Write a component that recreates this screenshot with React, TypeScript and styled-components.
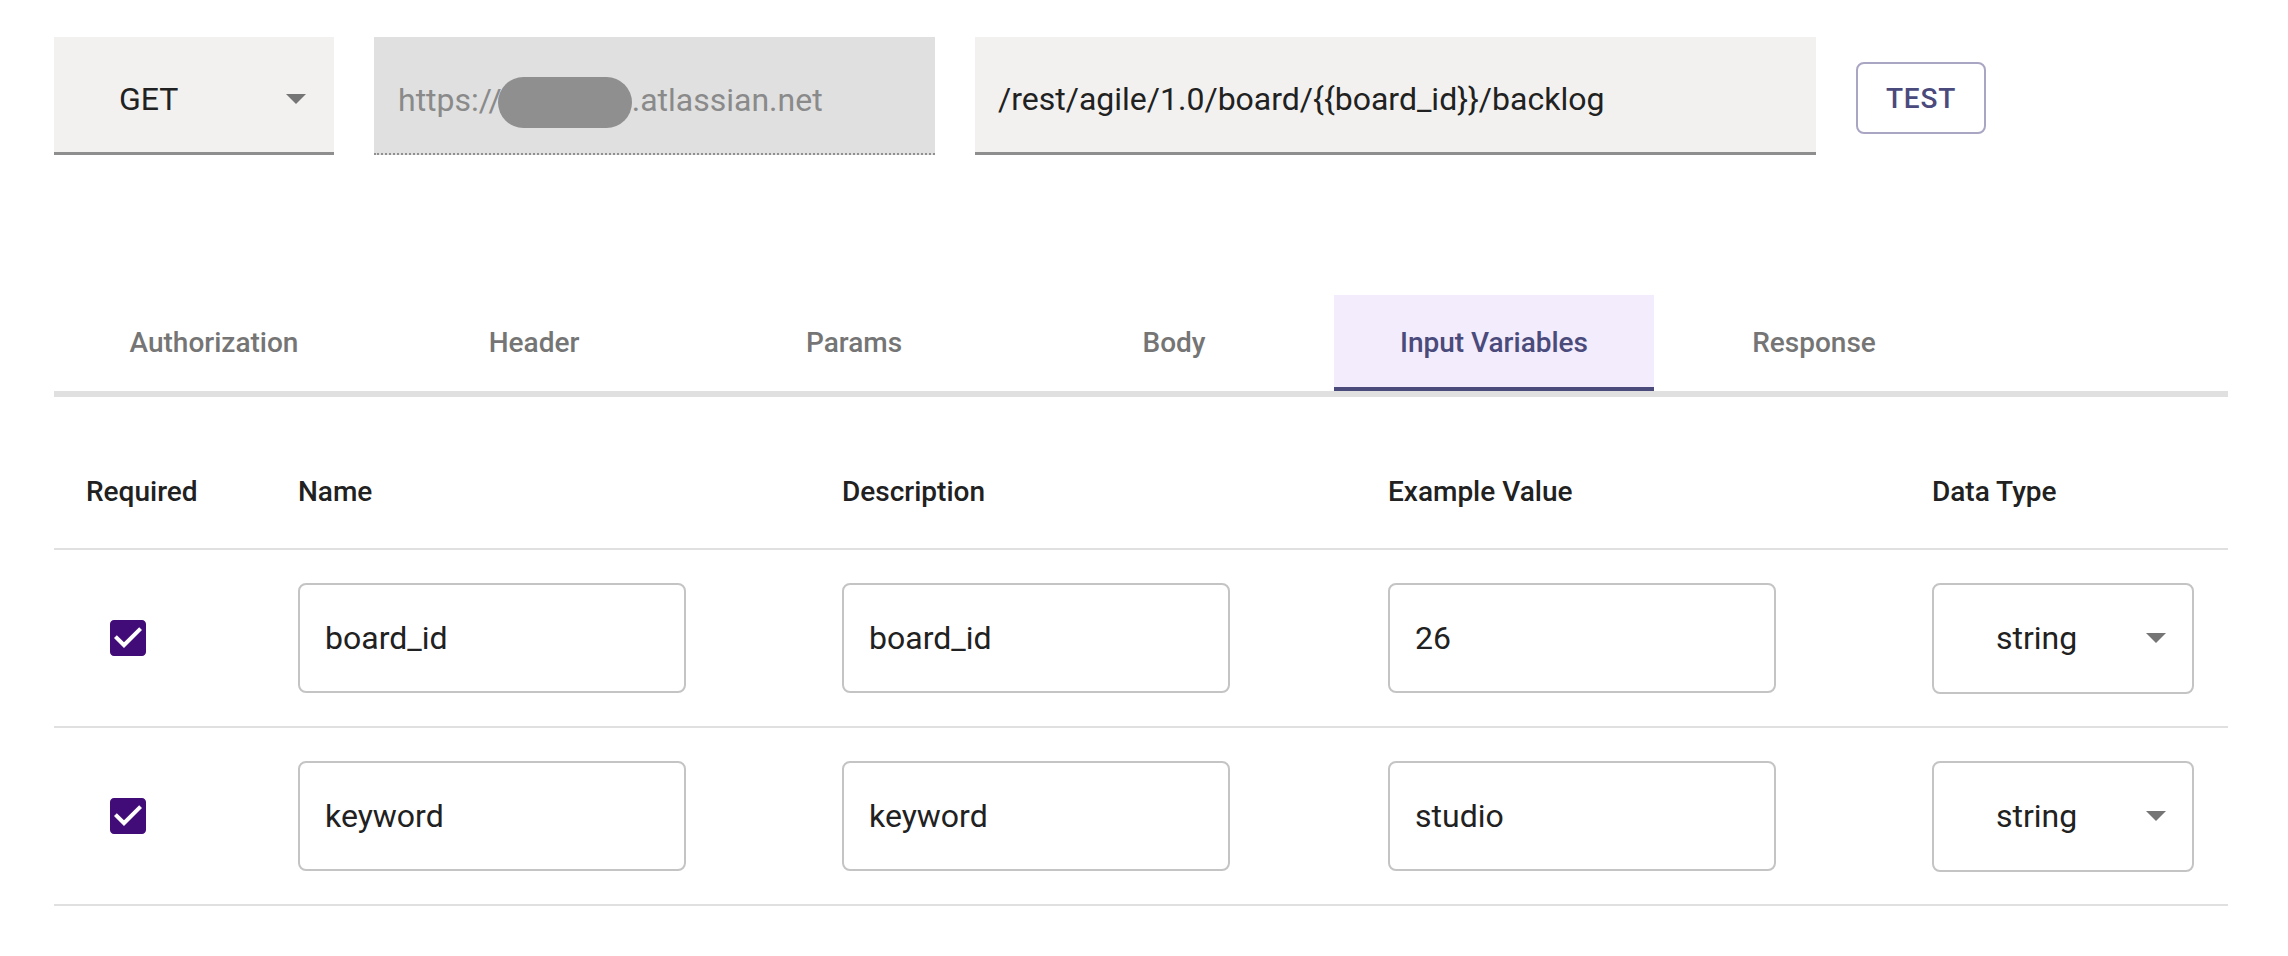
import React from "react";
import styled, { createGlobalStyle } from "styled-components";

const Global = createGlobalStyle`
  html, body { margin: 0; padding: 0; background: #ffffff; }
  body { font-family: Roboto, "Liberation Sans", Arial, sans-serif; color: #212121; }
  * { box-sizing: border-box; }
`;

const Page = styled.div`
  width: 2288px;
  min-height: 956px;
  padding: 37px 60px 0 54px;
`;

const TopBar = styled.div`
  display: flex;
  align-items: flex-start;
  gap: 40px;
`;

const Field = styled.div<{ $w: number; $disabled?: boolean; $pl: number }>`
  width: ${(p) => p.$w}px;
  height: 118px;
  display: flex;
  align-items: center;
  padding: 9px 28px 0 ${(p) => p.$pl}px;
  background: ${(p) => (p.$disabled ? "#e0e0e0" : "#f2f1f0")};
  border-bottom: ${(p) => (p.$disabled ? "2px dotted #8f8f8f" : "3px solid #8e8e8e")};
  font-size: 32px;
  color: ${(p) => (p.$disabled ? "#8a8a8a" : "#212121")};
  white-space: nowrap;
`;

const Blur = styled.span`
  display: inline-block;
  width: 134px;
  height: 51px;
  border-radius: 26px;
  background: #8f8f8f;
  margin: 5px 0 0 -4px;
`;

const Arrow = styled.svg`
  margin-left: auto;
  flex: none;
`;

const TestButton = styled.button`
  margin-top: 25px;
  width: 130px;
  height: 72px;
  border: 2px solid #a9a6c4;
  border-radius: 8px;
  background: #ffffff;
  color: #4b4a7d;
  font-family: Roboto, "Liberation Sans", Arial, sans-serif;
  font-weight: 500;
  font-size: 28px;
  letter-spacing: 0.8px;
  text-transform: uppercase;
  padding: 0;
`;

const TabList = styled.div`
  margin-top: 140px;
  width: 2174px;
  display: flex;
  border-bottom: 6px solid #e0e0e0;
`;

const Tab = styled.div<{ $active?: boolean }>`
  width: 320px;
  height: 96px;
  display: flex;
  align-items: center;
  justify-content: center;
  font-size: 28px;
  font-weight: 500;
  letter-spacing: 0;
  color: ${(p) => (p.$active ? "#4a4a7b" : "#757575")};
  background: ${(p) => (p.$active ? "#f3ecfc" : "transparent")};
  border-bottom: 4px solid ${(p) => (p.$active ? "#4a4a7b" : "transparent")};
  padding-top: 2px;
`;

const Table = styled.div`
  margin-top: 39px;
  width: 2174px;
`;

const Row = styled.div<{ $head?: boolean }>`
  display: grid;
  grid-template-columns: 212px 544px 546px 544px 1fr;
  align-items: center;
  height: ${(p) => (p.$head ? 114 : 178)}px;
  border-bottom: 2px solid #e0e0e0;
`;

const HeadCell = styled.div`
  padding: 0 32px;
  font-size: 28px;
  font-weight: 500;
  line-height: 48px;
  color: #212121;
`;

const Cell = styled.div<{ $pl?: number }>`
  padding-left: ${(p) => p.$pl ?? 32}px;
  display: flex;
  align-items: center;
`;

const TextInput = styled.input`
  width: 388px;
  height: 110px;
  border: 2px solid #c4c4c4;
  border-radius: 8px;
  padding: 0 25px;
  font-family: Roboto, "Liberation Sans", Arial, sans-serif;
  font-size: 32px;
  color: #212121;
  background: #ffffff;
  outline: none;
`;

const Select = styled.div`
  width: 262px;
  height: 111px;
  border: 2px solid #c4c4c4;
  border-radius: 8px;
  display: flex;
  align-items: center;
  padding: 0 26px 0 62px;
  font-size: 32px;
  color: #212121;
`;

const Check = () => (
  <svg width="48" height="48" viewBox="0 0 24 24" style={{ display: "block" }}>
    <path
      fill="#420c78"
      d="M19 3H5c-1.11 0-2 .9-2 2v14c0 1.1.89 2 2 2h14c1.11 0 2-.9 2-2V5c0-1.1-.89-2-2-2zm-9 14l-5-5 1.41-1.41L10 14.17l7.59-7.59L19 8l-9 9z"
    />
  </svg>
);

const DropArrow = () => (
  <Arrow width="20" height="10" viewBox="0 0 20 10">
    <path d="M0 0 L20 0 L10 10 Z" fill="#757575" />
  </Arrow>
);

const rows = [
  { name: "board_id", desc: "board_id", example: "26", type: "string" },
  { name: "keyword", desc: "keyword", example: "studio", type: "string" },
];

const tabs = ["Authorization", "Header", "Params", "Body", "Input Variables", "Response"];

export default function App() {
  return (
    <>
      <Global />
      <Page>
        <TopBar>
          <Field $w={280} $pl={65}>
            GET
            <DropArrow />
          </Field>
          <Field $w={561} $pl={24} $disabled>
            https://
            <Blur />
            .atlassian.net
          </Field>
          <Field $w={841} $pl={23}>
            {"/rest/agile/1.0/board/{{board_id}}/backlog"}
          </Field>
          <TestButton>Test</TestButton>
        </TopBar>

        <TabList>
          {tabs.map((t) => (
            <Tab key={t} $active={t === "Input Variables"}>
              {t}
            </Tab>
          ))}
        </TabList>

        <Table>
          <Row $head>
            <HeadCell>Required</HeadCell>
            <HeadCell>Name</HeadCell>
            <HeadCell>Description</HeadCell>
            <HeadCell>Example Value</HeadCell>
            <HeadCell>Data Type</HeadCell>
          </Row>
          {rows.map((r) => (
            <Row key={r.name}>
              <Cell $pl={50}>
                <Check />
              </Cell>
              <Cell>
                <TextInput readOnly defaultValue={r.name} />
              </Cell>
              <Cell>
                <TextInput readOnly defaultValue={r.desc} />
              </Cell>
              <Cell>
                <TextInput readOnly defaultValue={r.example} />
              </Cell>
              <Cell>
                <Select>
                  {r.type}
                  <DropArrow />
                </Select>
              </Cell>
            </Row>
          ))}
        </Table>
      </Page>
    </>
  );
}
